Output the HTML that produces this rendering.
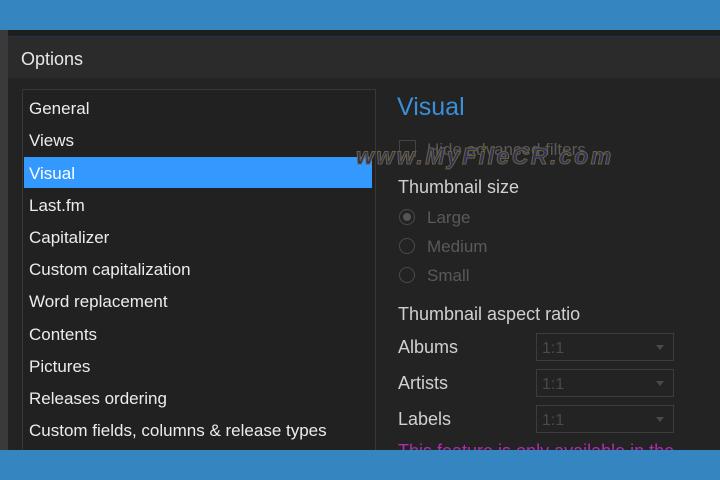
<!DOCTYPE html><html><head><style>
body{margin:0;width:720px;height:480px;overflow:hidden;background:#1e1e1e;font-family:"Liberation Sans",sans-serif;position:relative}
.a{position:absolute}
.it{position:absolute;left:29px;color:#ececec;font-size:17px;white-space:nowrap}
.g{color:#5a5a5a;font-size:17px;position:absolute;white-space:nowrap}
.w{color:#d0d0d0;font-size:18px;position:absolute;white-space:nowrap}
.rad{position:absolute;left:399px;width:14px;height:14px;border:1.5px solid #4a4a4a;border-radius:50%}
.sel{position:absolute;left:536px;width:138px;height:28px;border:1.5px solid #3c3c3c;color:#4a4a4a;font-size:16px;box-sizing:border-box;padding:6px 0 0 5px}
.sel:after{content:"";position:absolute;right:9px;top:11px;border:4px solid transparent;border-top:5px solid #4a4a4a}
</style></head><body>
<div class="a" style="left:0;top:0;width:720px;height:30px;background:#3585c1"></div>
<div class="a" style="left:0;top:30px;width:8px;height:420px;background:#3a3a3a"></div>
<div class="a" style="left:8px;top:36px;width:712px;height:42px;background:#2b2b2b;border-top:1px solid #1a3550"></div>
<div class="a" style="left:21px;top:49px;color:#e8e8e8;font-size:18px">Options</div>
<div class="a" style="left:8px;top:78px;width:712px;height:372px;background:#232323"></div>
<div class="a" style="left:22px;top:89px;width:352px;height:370px;border:1px solid #383838;background:#212121"></div>
<div class="a" style="left:24px;top:157px;width:348px;height:31px;background:#3399ff"></div>
<div class="it" style="top:99px">General</div>
<div class="it" style="top:131px">Views</div>
<div class="it" style="top:164px;color:#fff">Visual</div>
<div class="it" style="top:196px">Last.fm</div>
<div class="it" style="top:228px">Capitalizer</div>
<div class="it" style="top:260px">Custom capitalization</div>
<div class="it" style="top:292px">Word replacement</div>
<div class="it" style="top:325px">Contents</div>
<div class="it" style="top:357px">Pictures</div>
<div class="it" style="top:389px">Releases ordering</div>
<div class="it" style="top:421px">Custom fields, columns &amp; release types</div>
<div class="a" style="left:397px;top:93px;color:#3a8fd8;font-size:25px">Visual</div>
<div class="a" style="left:399px;top:140px;width:15px;height:15px;border:1.5px solid #444"></div>
<div class="g" style="left:427px;top:140px">Hide advanced filters</div>
<div class="a" style="left:356px;top:143px;font-size:23px;font-weight:bold;font-style:italic;color:#2c2e6a;-webkit-text-stroke:1px #6b6233;letter-spacing:2.5px;white-space:nowrap">www.MyFileCR.com</div>
<div class="w" style="left:398px;top:177px">Thumbnail size</div>
<div class="rad" style="top:209px"><div class="a" style="left:3px;top:3px;width:8px;height:8px;border-radius:50%;background:#555"></div></div>
<div class="g" style="left:427px;top:208px">Large</div>
<div class="rad" style="top:238px"></div><div class="g" style="left:427px;top:237px">Medium</div>
<div class="rad" style="top:267px"></div><div class="g" style="left:427px;top:266px">Small</div>
<div class="w" style="left:398px;top:304px">Thumbnail aspect ratio</div>
<div class="w" style="left:398px;top:337px">Albums</div><div class="sel" style="top:333px">1:1</div>
<div class="w" style="left:398px;top:373px">Artists</div><div class="sel" style="top:369px">1:1</div>
<div class="w" style="left:398px;top:409px">Labels</div><div class="sel" style="top:405px">1:1</div>
<div class="a" style="left:398px;top:441px;color:#b02cb0;font-size:18px;white-space:nowrap">This feature is only available in the</div>
<div class="a" style="left:0;top:450px;width:720px;height:30px;background:#3585c1"></div>
</body></html>
